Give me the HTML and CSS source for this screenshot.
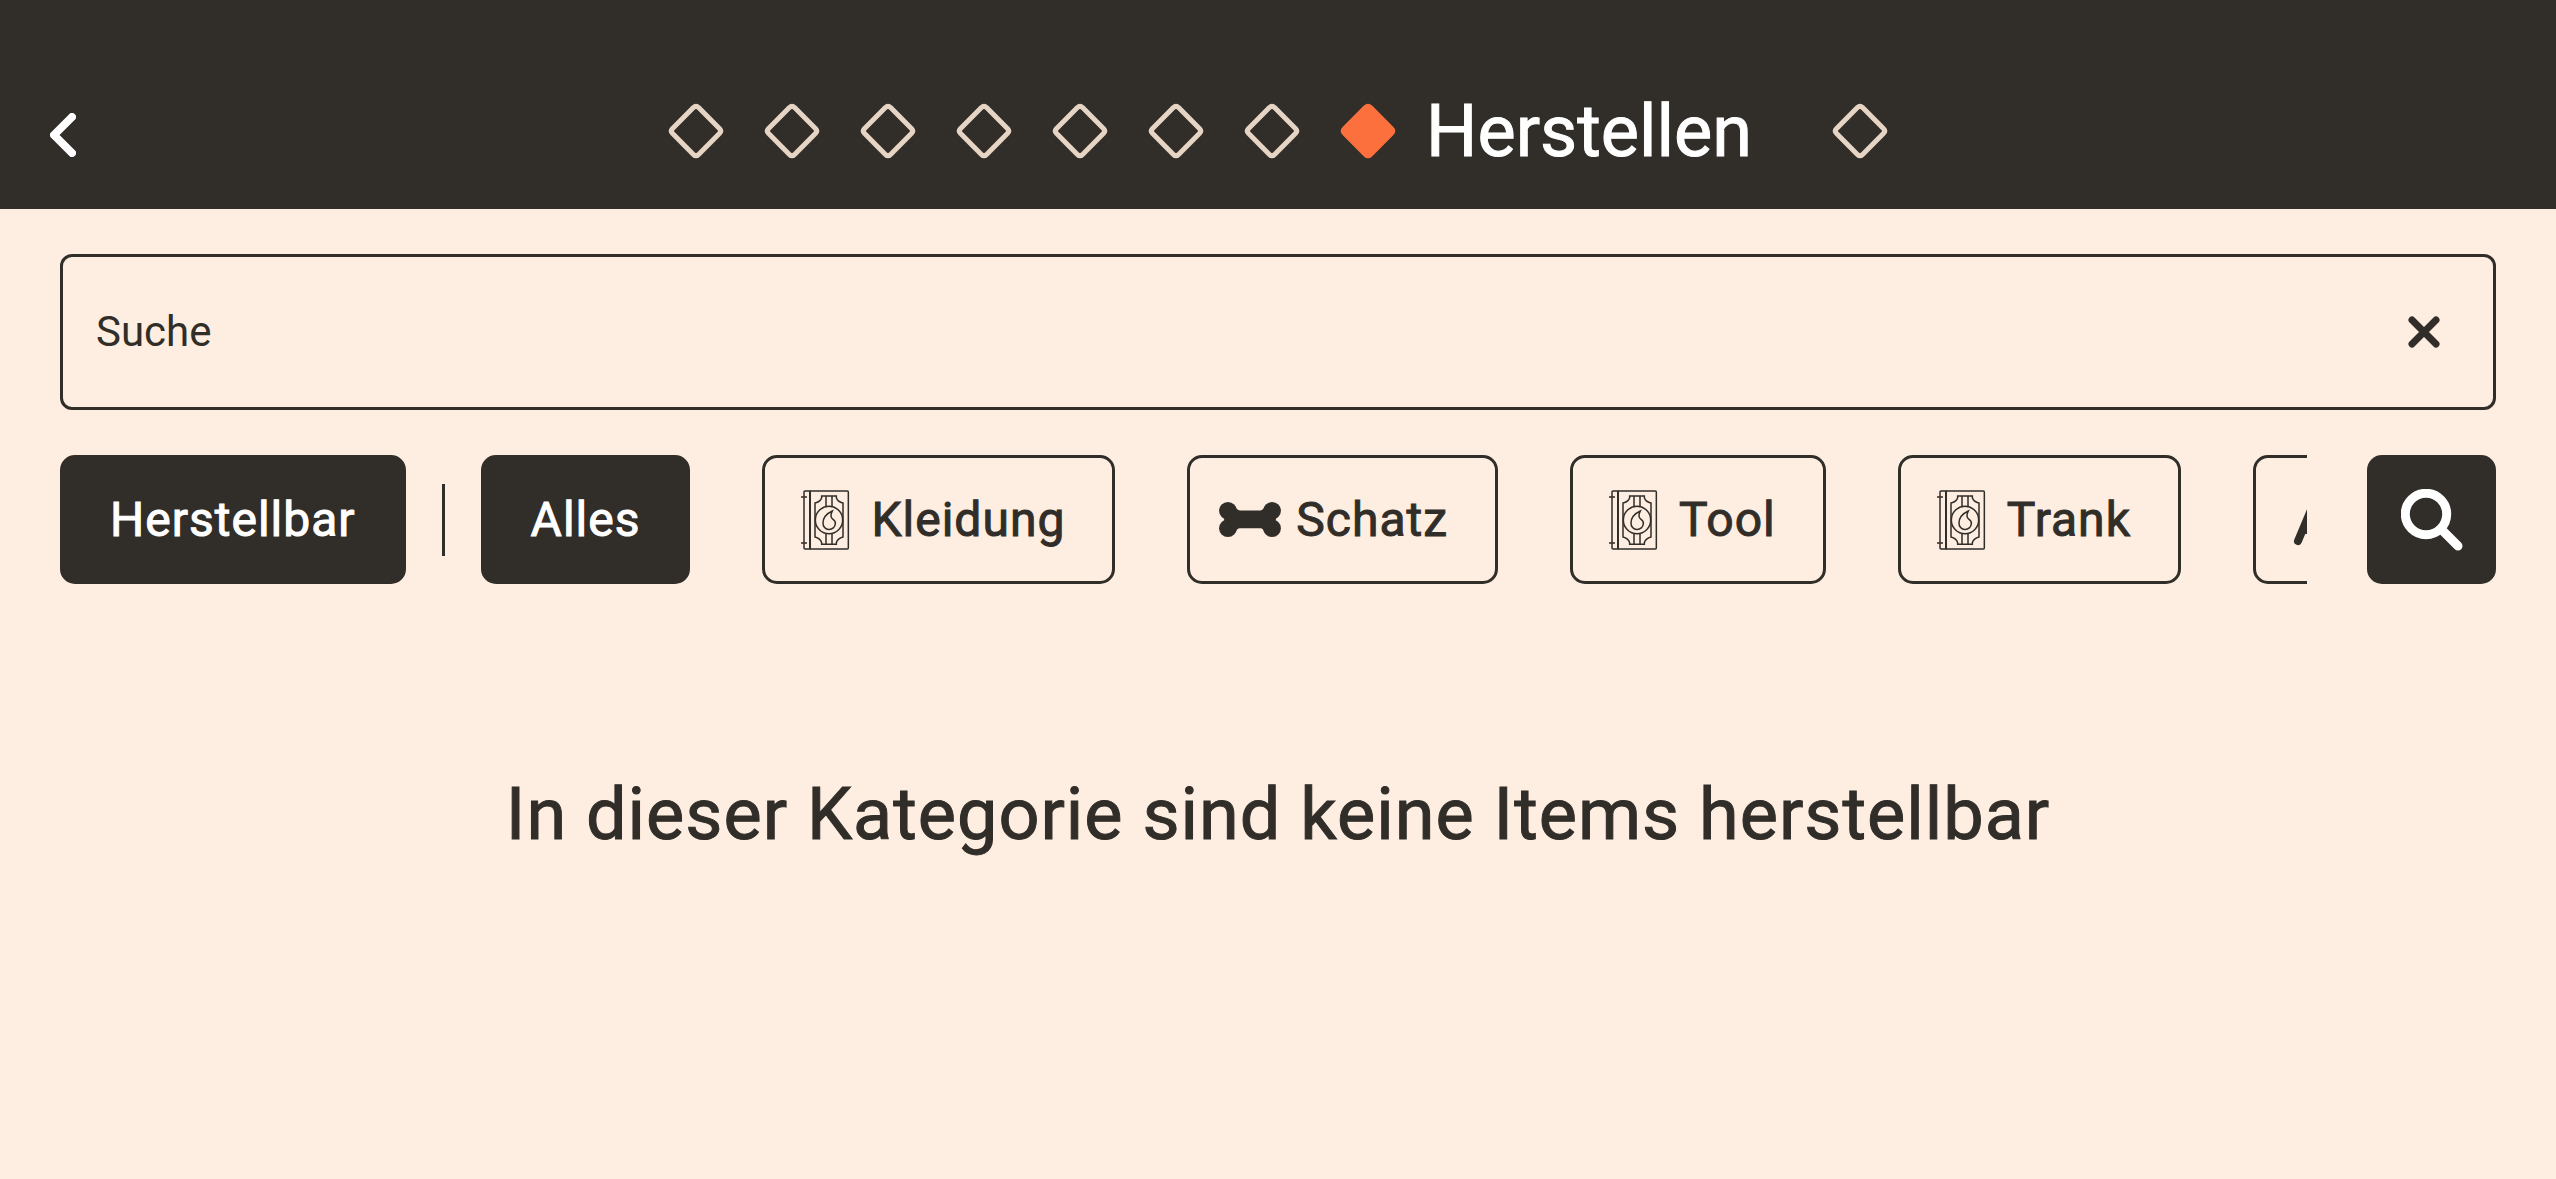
FILE: index.html
```html
<!DOCTYPE html>
<html lang="de">
<head>
<meta charset="utf-8">
<meta name="viewport" content="width=device-width, initial-scale=1">
<title>Herstellen</title>
<link rel="stylesheet" href="styles.css">
</head>
<body>
<svg class="sprite" aria-hidden="true">
  <symbol id="diamond" viewBox="0 0 56 56">
    <path d="M25.4 4.6 L4.6 25.4 Q2 28 4.6 30.6 L25.4 51.4 Q28 54 30.6 51.4 L51.4 30.6 Q54 28 51.4 25.4 L30.6 4.6 Q28 2 25.4 4.6Z"/>
  </symbol>
  <symbol id="book" viewBox="33 28 144 180">
    <g fill="none" stroke="currentColor" stroke-width="4.5">
      <rect x="42" y="31" width="133" height="174" rx="3"/>
      <path d="M60 31V205" stroke-width="6"/>
      <path d="M33 49H51M33 187H51"/>
      <path d="M95 46H139V51Q143 63 159 67V169Q143 173 139 186V191H95V186Q91 173 75 169V67Q91 63 95 51Z"/>
      <path d="M108 46V78M126 46V78M108 159V191M126 159V191"/>
      <circle cx="117" cy="118" r="41"/>
      <path d="M127 91Q99 104 99 127A18 18 0 0 0 136 129Q137 121 129 116Q118 109 127 91Z"/>
    </g>
  </symbol>
  <symbol id="bone" viewBox="152 188 182 103">
    <g fill="currentColor">
      <circle cx="178" cy="214" r="26"/><circle cx="178" cy="265" r="26"/>
      <circle cx="308" cy="214" r="26"/><circle cx="308" cy="265" r="26"/>
      <path d="M200 201Q205 213 213 213H274Q281 213 286 201L320 239L286 278Q281 265 274 265H213Q205 265 200 278L166 239Z"/>
    </g>
  </symbol>
</svg>

<header class="topbar">
  <button class="back" type="button" aria-label="Zurück">
    <svg viewBox="0 0 26 44"><path d="M22 4 4 22 22 40"/></svg>
  </button>
  <nav class="steps" aria-label="Bereiche">
    <a class="step" href="#1" aria-label="Bereich 1"><svg><use href="#diamond"/></svg></a>
    <a class="step" href="#2" aria-label="Bereich 2"><svg><use href="#diamond"/></svg></a>
    <a class="step" href="#3" aria-label="Bereich 3"><svg><use href="#diamond"/></svg></a>
    <a class="step" href="#4" aria-label="Bereich 4"><svg><use href="#diamond"/></svg></a>
    <a class="step" href="#5" aria-label="Bereich 5"><svg><use href="#diamond"/></svg></a>
    <a class="step" href="#6" aria-label="Bereich 6"><svg><use href="#diamond"/></svg></a>
    <a class="step" href="#7" aria-label="Bereich 7"><svg><use href="#diamond"/></svg></a>
    <a class="step step-active" href="#8" aria-current="page"><svg><use href="#diamond"/></svg></a>
    <h1 class="title">Herstellen</h1>
    <a class="step" href="#9" aria-label="Bereich 9"><svg><use href="#diamond"/></svg></a>
  </nav>
</header>

<main class="content">
  <form class="search">
    <input class="search-input" type="text" placeholder="Suche" aria-label="Suche">
    <button class="clear" type="reset" aria-label="Löschen">
      <svg viewBox="0 0 32 32"><path d="M4 4 28 28M28 4 4 28"/></svg>
    </button>
  </form>

  <div class="filters">
    <div class="chips">
      <button class="chip chip-on" type="button">Herstellbar</button>
      <span class="divider"></span>
      <button class="chip chip-on" type="button">Alles</button>
      <button class="chip chip-icon" type="button"><svg class="icon"><use href="#book" width="72" height="60"/></svg>Kleidung</button>
      <button class="chip chip-icon" type="button"><svg class="icon"><use href="#bone" y="12" width="72" height="35"/></svg>Schatz</button>
      <button class="chip chip-icon" type="button"><svg class="icon"><use href="#book" width="72" height="60"/></svg>Tool</button>
      <button class="chip chip-icon" type="button"><svg class="icon"><use href="#book" width="72" height="60"/></svg>Trank</button>
      <button class="chip chip-icon" type="button" aria-label="Weitere Kategorie">
        <svg class="icon" viewBox="0 0 72 60"><path class="stroke" d="M18 51 36 8 54 51M24 40H48"/></svg>
      </button>
    </div>
    <button class="find" type="button" aria-label="Suchen">
      <svg viewBox="0 0 62 62"><circle cx="25" cy="25" r="20.7"/><path d="M40 40 57 57"/></svg>
    </button>
  </div>

  <p class="empty">In dieser Kategorie sind keine Items herstellbar</p>
</main>
</body>
</html>
```

FILE: styles.css
```css
:root {
  --dark: #312d28;
  --cream: #fdeee1;
  --sand: #e6d5c4;
  --orange: #fb703d;
}

* {
  box-sizing: border-box;
}

body {
  margin: 0;
  min-height: 100vh;
  background: var(--cream);
  color: var(--dark);
  font-family: Roboto, "Liberation Sans", sans-serif;
  -webkit-text-stroke: 1px currentColor;
}

button {
  padding: 0;
  border: 0;
  background: none;
  color: inherit;
  font: inherit;
  cursor: pointer;
}

svg {
  display: block;
}

.sprite {
  display: none;
}

.topbar {
  display: grid;
  grid-template-columns: 144px 1fr 144px;
  align-items: center;
  padding: 53px 0 0;
  height: 209px;
  background: var(--dark);
  color: #fff;
}

.back {
  padding: 8px 0 0 50px;
}

.back svg {
  width: 26px;
  height: 44px;
  fill: none;
  stroke: #fff;
  stroke-width: 8;
  stroke-linecap: round;
  stroke-linejoin: round;
}

.steps {
  display: flex;
  justify-content: center;
  align-items: center;
}

.step {
  display: flex;
  justify-content: center;
  width: 96px;
}

.step svg {
  width: 56px;
  height: 56px;
  fill: none;
  stroke: var(--sand);
  stroke-width: 5;
}

.step-active svg {
  fill: var(--orange);
  stroke: var(--orange);
}

.title {
  margin: 0;
  padding: 2px 60px 0 10px;
  font-size: 72px;
  font-weight: 400;
  line-height: 84px;
}

.content {
  display: flex;
  flex-direction: column;
  gap: 45px;
  padding: 45px 60px;
}

.search {
  display: flex;
  align-items: center;
  height: 156px;
  padding: 0 53px 0 33px;
  border: 3px solid var(--dark);
  border-radius: 12px;
}

.search-input {
  flex: 1;
  min-width: 0;
  padding: 0;
  border: 0;
  outline: 0;
  background: none;
  color: var(--dark);
  font: 400 42px/60px Roboto, "Liberation Sans", sans-serif;
  -webkit-text-stroke: 0;
}

.search-input::placeholder {
  color: var(--dark);
  opacity: 1;
}

.clear svg {
  width: 32px;
  height: 32px;
  stroke: var(--dark);
  stroke-width: 7;
  stroke-linecap: round;
}

.filters {
  display: flex;
  gap: 60px;
}

.chips {
  display: flex;
  flex: 1;
  gap: 72px;
  align-items: center;
  min-width: 0;
  overflow: hidden;
}

.chip {
  flex: none;
  height: 129px;
  padding: 0 47px;
  border: 3px solid var(--dark);
  border-radius: 15px;
  font-size: 48px;
  letter-spacing: 1px;
}

.chip-on {
  background: var(--dark);
  color: #fff;
}

.chip-icon {
  display: flex;
  align-items: center;
  gap: 10px;
  padding: 0 47px 0 24px;
}

.divider {
  flex: none;
  width: 3px;
  height: 72px;
  margin: 0 -36px;
  background: var(--dark);
}

.icon {
  width: 72px;
  height: 60px;
}

.stroke {
  fill: none;
  stroke: var(--dark);
  stroke-width: 8;
  stroke-linecap: round;
  stroke-linejoin: round;
}

.find {
  display: grid;
  place-items: center;
  width: 129px;
  height: 129px;
  border-radius: 15px;
  background: var(--dark);
}

.find svg {
  width: 62px;
  height: 62px;
  fill: none;
  stroke: #fff;
  stroke-width: 9;
  stroke-linecap: round;
}

.empty {
  margin: 0;
  padding-top: 144px;
  font-size: 72px;
  line-height: 84px;
  letter-spacing: 1px;
  text-align: center;
}
```
